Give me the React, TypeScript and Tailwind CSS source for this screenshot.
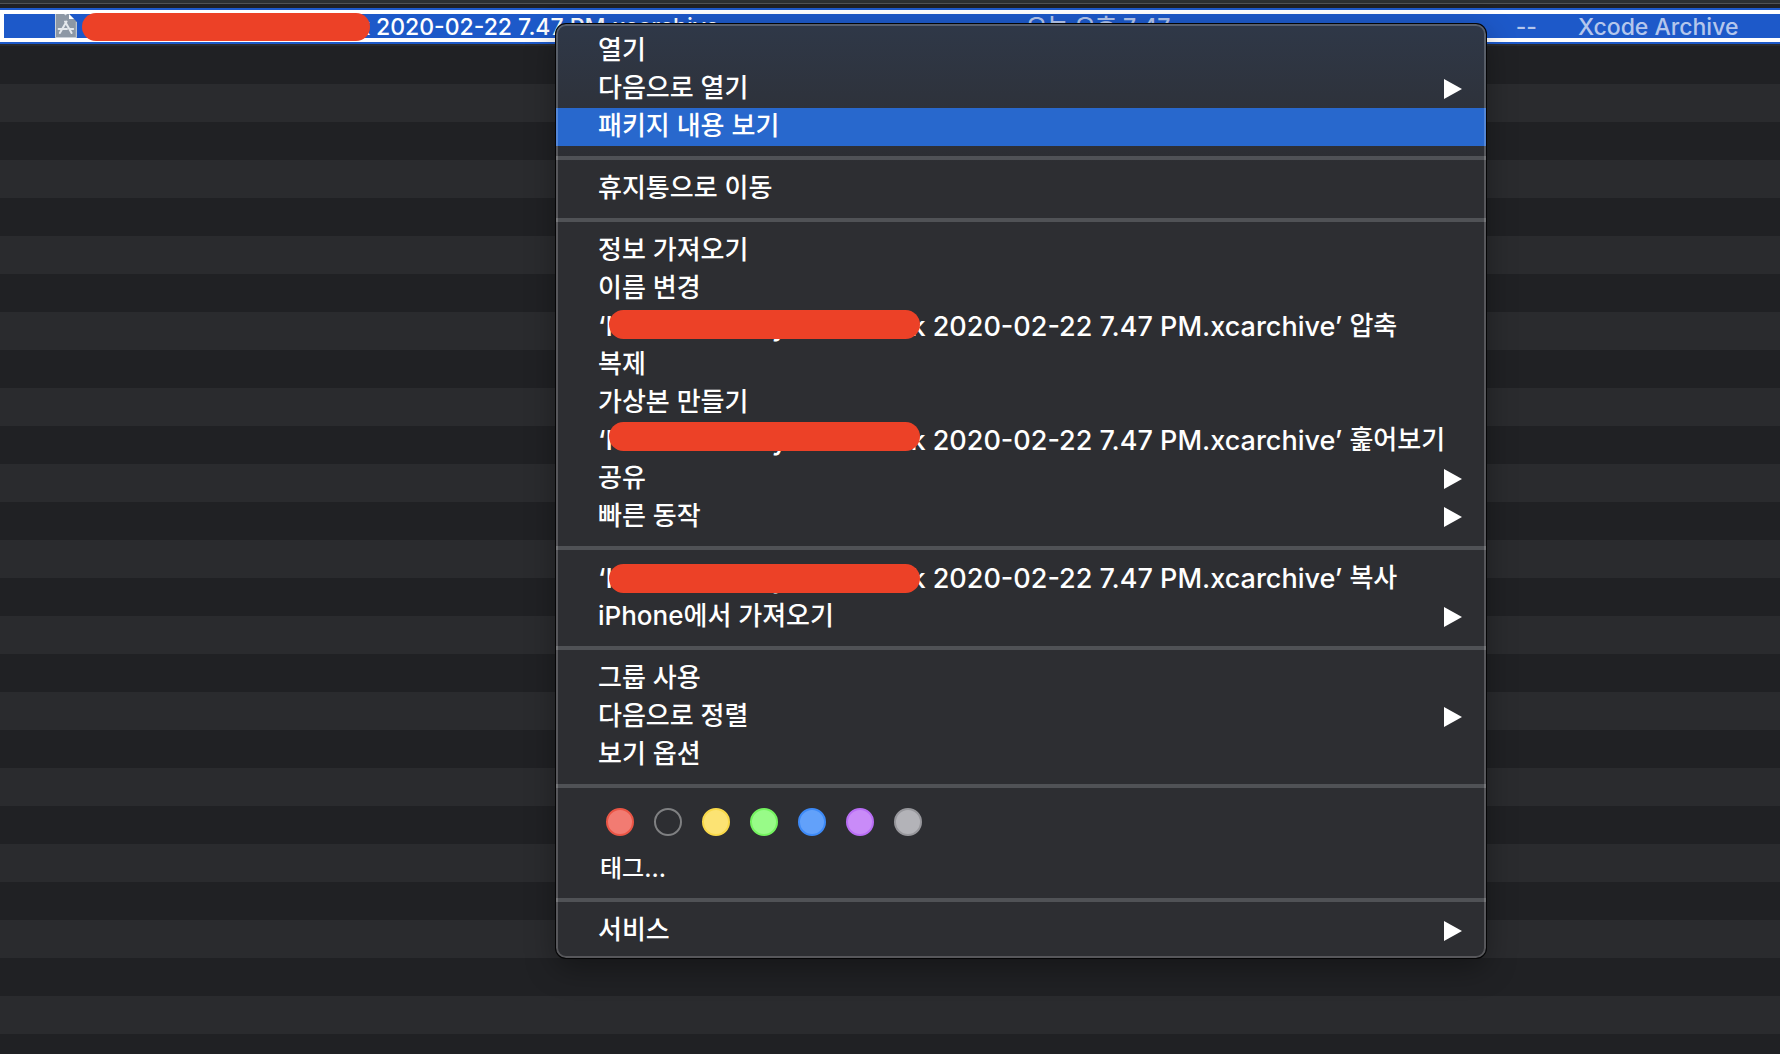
import clsx from "clsx";

type Item = {
  label: string;
  // text in front of the label that holds the hidden file name
  file?: boolean;
  pill?: string;
  submenu?: boolean;
  active?: boolean;
};

const groups: Item[][] = [
  [
    { label: "열기" },
    { label: "다음으로 열기", submenu: true },
    { label: "패키지 내용 보기", active: true },
  ],
  [{ label: "휴지통으로 이동" }],
  [
    { label: "정보 가져오기" },
    { label: "이름 변경" },
    { label: "압축", file: true, pill: "top-0.5" },
    { label: "복제" },
    { label: "가상본 만들기" },
    { label: "훑어보기", file: true, pill: "top-0" },
    { label: "공유", submenu: true },
    { label: "빠른 동작", submenu: true },
  ],
  [
    { label: "복사", file: true, pill: "top-1" },
    { label: "iPhone에서 가져오기", submenu: true },
  ],
  [
    { label: "그룹 사용" },
    { label: "다음으로 정렬", submenu: true },
    { label: "보기 옵션" },
  ],
];

const tags = [
  { name: "빨간색", color: "bg-[#f27b72] border-[#ea5545]" },
  { name: "없음", color: "bg-transparent border-[#7f8082]" },
  { name: "노란색", color: "bg-[#fce373] border-[#f9d949]" },
  { name: "초록색", color: "bg-[#98fb88] border-[#74f35f]" },
  { name: "파란색", color: "bg-[#62a1fa] border-[#3d8af7]" },
  { name: "보라색", color: "bg-[#c98bf8] border-[#b96ef5]" },
  { name: "회색", color: "bg-[#b3b3b8] border-[#97979c]" },
];

const stripes = Array.from({ length: 40 }, (_, i) => i);

function ArchiveIcon() {
  return (
    <svg viewBox="0 0 22 24" className="h-6 w-[22px] shrink-0" aria-hidden="true">
      <path d="M0 0H14L22 8V24H0Z" fill="#8d98a5" />
      <path d="M0.5 0V23.5H21.3V8" fill="none" stroke="#c9d0d8" />
      <path d="M14 0V5H19Z" fill="#fff" />
      <path d="M9 0H12L10.5 1.5Z" fill="#dfe4e9" />
      <g fill="none" stroke="#e4e8ec" strokeWidth="2" strokeLinecap="round">
        <path d="M10 7.5L16.6 19M11.6 7.5L4.8 19" />
        <path d="M3.6 15H12M15 15H18.2" />
      </g>
    </svg>
  );
}

function Arrow() {
  return (
    <svg viewBox="0 0 18 20" className="h-5 w-[18px]" aria-hidden="true">
      <path d="M0 0L18 10L0 20Z" fill="#fff" />
    </svg>
  );
}

function Separator() {
  return <div role="separator" className="my-2.5 h-1 bg-[#505256]" />;
}

function FileName({ pill }: { pill?: string }) {
  return (
    <span className="flex text-[27px]">
      <span>‘</span>
      <span className="flex w-80 justify-between">
        <span>I</span>
        <span className="pl-9">y</span>
        <span>k</span>
      </span>
      <span
        className={clsx(
          "absolute left-[53px] h-[29px] w-[311px] rounded-full bg-[#ec4127]",
          pill
        )}
      />
      <span className="whitespace-pre"> 2020-02-22 7.47 PM.xcarchive’ </span>
    </span>
  );
}

function MenuItem({ label, file, pill, submenu, active }: Item) {
  return (
    <button
      role="menuitem"
      className={clsx(
        "relative flex h-[38px] w-full items-center pl-[42px] pr-6 text-left",
        active && "bg-[#2868cd]"
      )}
    >
      {file && <FileName pill={pill} />}
      <span className="flex-1 pb-1">{label}</span>
      {submenu && <Arrow />}
    </button>
  );
}

function ContextMenu() {
  return (
    <div
      role="menu"
      className="absolute left-[556px] top-6 w-[930px] overflow-hidden rounded-[10px] bg-[#2d2e32] bg-linear-to-b from-[#2f3848] to-[#2d2e32] to-[140px] py-2 text-[26px] font-medium text-white shadow-[0_0_0_1px_#050506,0_10px_30px_rgba(0,0,0,0.35)] after:pointer-events-none after:absolute after:inset-0 after:rounded-[10px] after:border-2 after:border-white/20"
    >
      {groups.map((items, i) => (
        <div key={i}>
          {items.map((item) => (
            <MenuItem key={item.label} {...item} />
          ))}
          <Separator />
        </div>
      ))}

      <div className="flex gap-5 pl-[50px] pt-2.5">
        {tags.map((tag) => (
          <button
            key={tag.name}
            aria-label={tag.name}
            className={clsx("size-7 rounded-full border-2", tag.color)}
          />
        ))}
      </div>
      <button
        role="menuitem"
        className="mt-3.5 flex h-[38px] w-full items-center pl-11 text-2xl"
      >
        태그...
      </button>
      <Separator />

      <MenuItem label="서비스" submenu />
    </div>
  );
}

export default function App() {
  return (
    <div className="relative flex h-screen flex-col overflow-hidden bg-[#202124] font-['Inter','Noto_Sans_CJK_KR',sans-serif]">
      <div className="h-1 shrink-0 border-b border-[#505355] bg-[#2c3032]" />

      <div className="mt-1 border-y-2 border-[#1d59c9]">
        <div className="border-y-4 border-l-4 border-white bg-[#1d59c9]">
          <table className="w-full table-fixed text-[23px] font-medium leading-6 text-[#b4c6ec]">
            <tbody>
              <tr className="h-6 whitespace-nowrap">
                <td className="w-[1022px] p-0 pl-[51px] text-white">
                  <div className="relative flex h-6">
                    <ArchiveIcon />
                    <span className="w-[293px] pt-px text-right">k</span>
                    <span className="absolute -top-px left-[27px] h-7 w-72 rounded-full bg-[#ec4127]" />
                    <span className="pl-1.5 pt-px">2020-02-22 7.47 PM.xcarchive</span>
                  </div>
                </td>
                <td className="w-[400px] p-0">
                  <div className="h-6 pt-px">오늘 오후 7:47</div>
                </td>
                <td className="w-[111px] p-0 text-right">
                  <div className="h-6 pt-px">--</div>
                </td>
                <td className="p-0 pl-[41px]">
                  <div className="h-6 pt-px">Xcode Archive</div>
                </td>
              </tr>
            </tbody>
          </table>
        </div>
      </div>

      <div className="min-h-0 flex-1 overflow-hidden border-t-2 border-[#2a2b2e]">
        {stripes.map((i) => (
          <div key={i} className="h-[38px] even:bg-[#2a2b2e]" />
        ))}
      </div>

      <ContextMenu />
    </div>
  );
}
